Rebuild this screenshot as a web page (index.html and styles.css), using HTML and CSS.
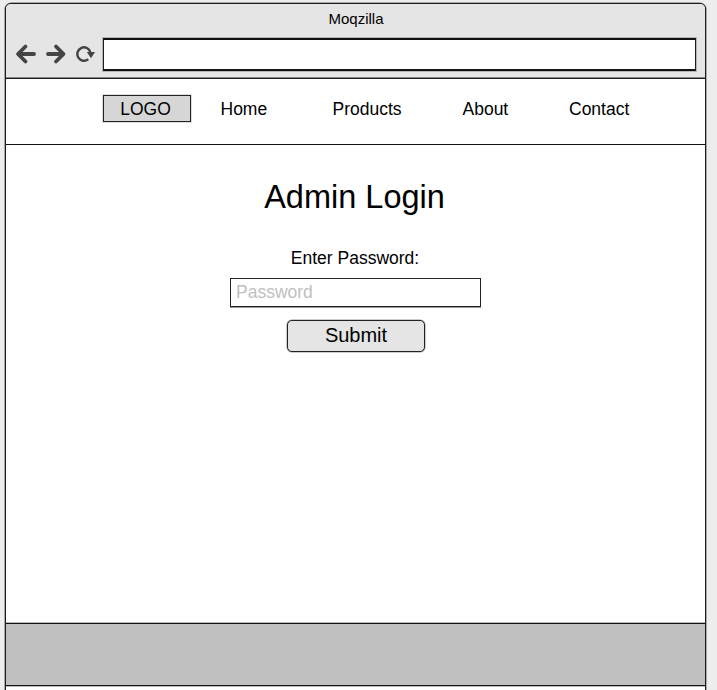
FILE: index.html
```
<!DOCTYPE html>
<html lang="en">
<head>
<meta charset="utf-8">
<title>Moqzilla</title>
<link rel="stylesheet" href="styles.css">
</head>
<body>
<div class="window">
  <header class="chrome">
    <div class="title">Moqzilla</div>
    <div class="toolbar">
      <svg class="controls" width="97" height="32" viewBox="0 0 97 32" fill="none" stroke="#444" stroke-width="3.8" stroke-linecap="round" stroke-linejoin="round">
        <path d="M19.5 8.500 12 16l7.500 7.500M12.500 16H28"/>
        <path d="M50 8.500 57.500 16l-7.500 7.500M57 16H42"/>
        <path d="M82.300 21.100A6.670 6.670 0 1 1 84.300 14" stroke-width="2.500" stroke-linecap="butt"/>
        <path d="M80.800 14h8.200l-4 6.300z" fill="#444" stroke="none"/>
      </svg>
      <div class="address"></div>
    </div>
  </header>
  <nav class="nav">
    <div class="logo">LOGO</div>
    <a class="home">Home</a>
    <a class="products">Products</a>
    <a class="about">About</a>
    <a class="contact">Contact</a>
  </nav>
  <main class="login">
    <h1>Admin Login</h1>
    <label for="password">Enter Password:</label>
    <input id="password" type="password" placeholder="Password">
    <button type="button">Submit</button>
  </main>
  <footer class="footer"></footer>
</div>
</body>
</html>
```
FILE: styles.css
```
* { box-sizing: border-box; }
html { height: 100%; overflow: hidden; }
body {
  margin: 0;
  height: 690px;
  overflow: hidden;
  padding: 3px 11px 0 5px;
  background: #ededed;
  color: #000;
  font: 17.5px/20px "Liberation Sans", Arial, sans-serif;
}
.window {
  height: 720px;
  border: 1px solid #1c1c1e;
  border-radius: 6px;
  box-shadow: 0 0 0 .5px #666;
  background: #fff;
  overflow: hidden;
}
.chrome {
  height: 75px;
  background: #e5e5e5;
  border-bottom: 1px solid #1c1c1e;
  box-shadow: inset 0 -1px #88888a;
}
.title {
  height: 34px;
  padding: 5px 0 0 1px;
  font-size: 15px;
  text-align: center;
}
.toolbar { display: flex; }
.controls { flex: none; }
.address {
  width: 593px;
  height: 33px;
  border: 1px solid #1c1c1e;
  border-top: 2px solid #111;
  border-bottom: 2px solid #111;
  box-shadow: 0 0 0 1px #b5b5b5;
  background: #fff;
}
.nav {
  display: flex;
  align-items: flex-start;
  height: 66px;
  padding: 16px 0 0 97px;
  border-bottom: 1px solid #111;
}
.nav a { margin-top: 4px; }
.logo {
  width: 88px;
  height: 27px;
  padding-right: 3px;
  border: 1px solid #222;
  box-shadow: 0 0 0 1px #ddd;
  background: #d6d6d6;
  line-height: 26px;
  text-align: center;
}
.nav .home { width: 112px; margin-left: 29.5px; }
.products { width: 130px; }
.about { width: 106.5px; }
.login {
  display: flex;
  flex-direction: column;
  align-items: center;
  height: 478px;
}
h1 {
  margin: 32px 2px 0 0;
  font-size: 32.5px;
  line-height: 40px;
  font-weight: 400;
}
label { margin: 31px 1px 0 0; }
input {
  width: 251px;
  height: 29px;
  margin: 10px 0 0;
  padding: 0 5px 1px;
  border: 1px solid #222;
  border-radius: 0;
  box-shadow: 0 1px #999;
  background: #fff;
  font: inherit;
}
input::placeholder { color: #c0c0c0; opacity: 1; }
button {
  width: 138px;
  height: 32px;
  margin: 13px 0 0 1px;
  padding: 0 0 2px;
  border: 1px solid #222;
  border-radius: 5px;
  box-shadow: 0 0 0 .5px #999;
  background: #e5e5e5;
  color: #000;
  font: 20px "Liberation Sans", Arial, sans-serif;
}
.footer {
  height: 63px;
  background: #c0c0c0;
  border-top: 1px solid #111;
  border-bottom: 1px solid #111;
  box-shadow: 0 -1px #bbb, 0 1px #bbb;
}
```
